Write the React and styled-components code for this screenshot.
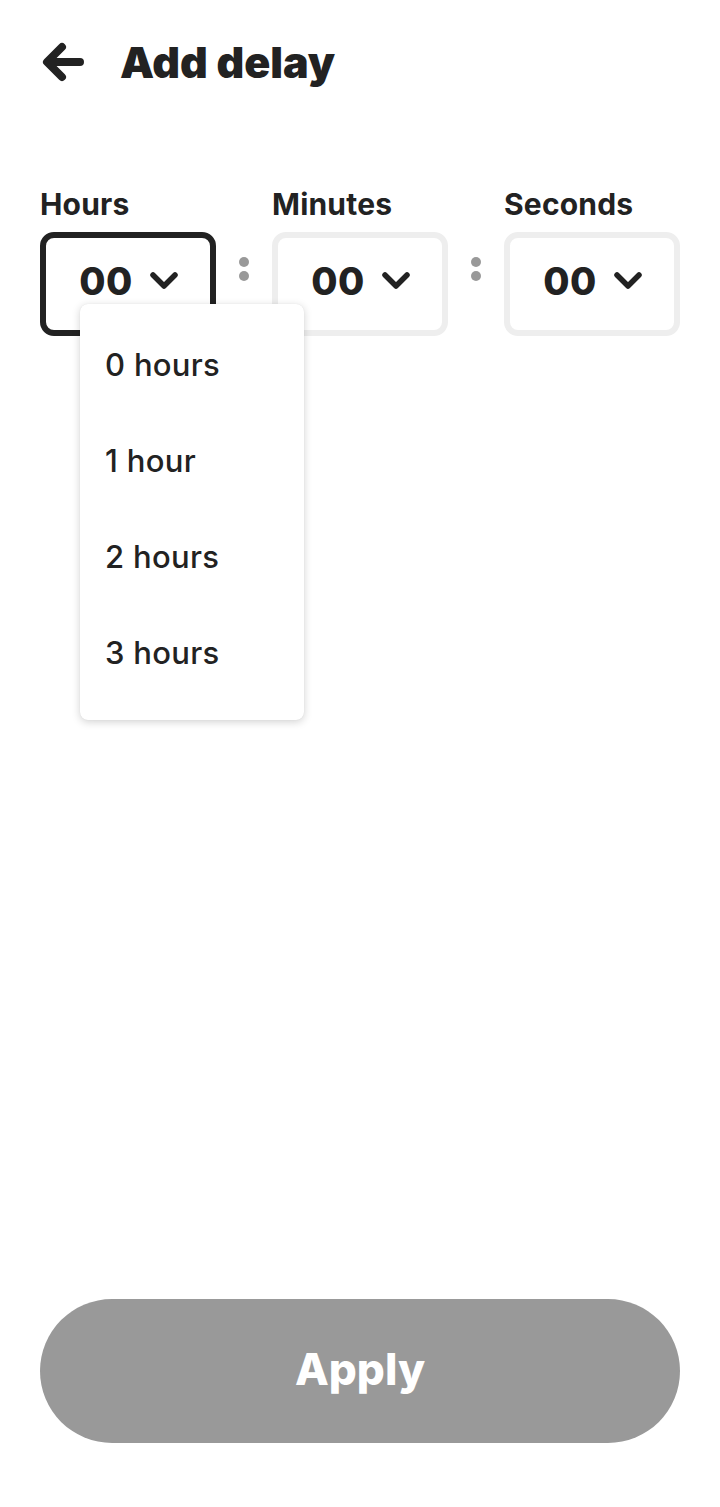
import React, { useState } from "react";
import styled, { createGlobalStyle } from "styled-components";

const GlobalStyle = createGlobalStyle`
  html, body {
    margin: 0;
    padding: 0;
    background: #ffffff;
  }
  body {
    font-family: Inter, Lato, "Noto Sans", sans-serif;
    color: #222222;
    -webkit-font-smoothing: antialiased;
  }
  * { box-sizing: border-box; }
`;

const Page = styled.div`
  min-height: 1507px;
  display: flex;
  flex-direction: column;
  padding: 0 40px 64px;
`;

const Header = styled.header`
  display: flex;
  align-items: center;
  gap: 34px;
  height: 48px;
  margin-top: 38px;
`;

const BackButton = styled.button`
  width: 46px;
  height: 46px;
  padding: 0;
  border: none;
  background: none;
  display: flex;
  align-items: center;
  justify-content: flex-start;
  cursor: pointer;
`;

const Title = styled.h1`
  margin: 0;
  font-size: 43px;
  font-weight: 900;
  letter-spacing: 0;
  line-height: 48px;
  color: #222222;
`;

const FieldRow = styled.div`
  display: grid;
  grid-template-columns: 176px 56px 176px 56px 176px;
  margin-top: 100px;
`;

const Field = styled.div`
  position: relative;
  display: flex;
  flex-direction: column;
`;

const Label = styled.label`
  font-size: 30px;
  font-weight: 700;
  letter-spacing: 0.2px;
  line-height: 36px;
  color: #222222;
  height: 46px;
`;

const SelectBox = styled.button`
  width: 176px;
  height: 104px;
  border-radius: 14px;
  border: 6px solid ${({ $active }) => ($active ? "#222222" : "#eeeeee")};
  background: #ffffff;
  display: flex;
  align-items: center;
  justify-content: center;
  gap: 16px;
  padding: 0 0 6px 2px;
  font-family: inherit;
  cursor: pointer;
`;

const Value = styled.span`
  font-size: 38px;
  font-weight: 800;
  letter-spacing: 0.5px;
  color: #222222;
  line-height: 1;
`;

const Colon = styled.div`
  display: flex;
  flex-direction: column;
  align-items: center;
  gap: 4px;
  padding-top: 71px;
`;

const Dot = styled.span`
  width: 10px;
  height: 10px;
  border-radius: 50%;
  background: #999999;
`;

const Menu = styled.ul`
  position: absolute;
  top: 118px;
  left: 40px;
  width: 224px;
  margin: 0;
  padding: 12px 0 20px;
  list-style: none;
  background: #ffffff;
  border-radius: 8px;
  box-shadow: 0 2px 8px rgba(0, 0, 0, 0.18), 0 0 1px rgba(0, 0, 0, 0.1);
  z-index: 2;
`;

const MenuItem = styled.li`
  height: 96px;
  display: flex;
  align-items: center;
  padding-left: 25px;
  font-size: 31px;
  font-weight: 500;
  letter-spacing: 0.3px;
  color: #222222;
  cursor: pointer;
`;

const Spacer = styled.div`
  flex: 1;
`;

const ApplyButton = styled.button`
  width: 640px;
  height: 144px;
  border: none;
  border-radius: 72px;
  background: #999999;
  color: #ffffff;
  font-family: inherit;
  font-size: 44px;
  font-weight: 800;
  letter-spacing: 0;
  padding: 0 0 4px;
  cursor: pointer;
`;

const BackArrow = () => (
  <svg width="46" height="46" viewBox="0 0 46 46" fill="none">
    <path
      d="M40 23H9M22 8L7 23l15 15"
      stroke="#222222"
      strokeWidth="8"
      strokeLinecap="round"
      strokeLinejoin="round"
    />
  </svg>
);

const Chevron = () => (
  <svg width="30" height="20" viewBox="0 0 30 20" fill="none">
    <path
      d="M4 4l11 11L26 4"
      stroke="#222222"
      strokeWidth="5.5"
      strokeLinecap="round"
      strokeLinejoin="round"
    />
  </svg>
);

const hourOptions = ["0 hours", "1 hour", "2 hours", "3 hours"];

function TimeField({ label, value, active, children }) {
  return (
    <Field>
      <Label>{label}</Label>
      <SelectBox $active={active}>
        <Value>{value}</Value>
        <Chevron />
      </SelectBox>
      {children}
    </Field>
  );
}

function Separator() {
  return (
    <Colon>
      <Dot />
      <Dot />
    </Colon>
  );
}

export default function App() {
  const [open] = useState(true);
  return (
    <>
      <GlobalStyle />
      <Page>
        <Header>
          <BackButton aria-label="Back">
            <BackArrow />
          </BackButton>
          <Title>Add delay</Title>
        </Header>

        <FieldRow>
          <TimeField label="Hours" value="00" active>
            {open && (
              <Menu>
                {hourOptions.map((o) => (
                  <MenuItem key={o}>{o}</MenuItem>
                ))}
              </Menu>
            )}
          </TimeField>
          <Separator />
          <TimeField label="Minutes" value="00" />
          <Separator />
          <TimeField label="Seconds" value="00" />
        </FieldRow>

        <Spacer />
        <ApplyButton>Apply</ApplyButton>
      </Page>
    </>
  );
}
